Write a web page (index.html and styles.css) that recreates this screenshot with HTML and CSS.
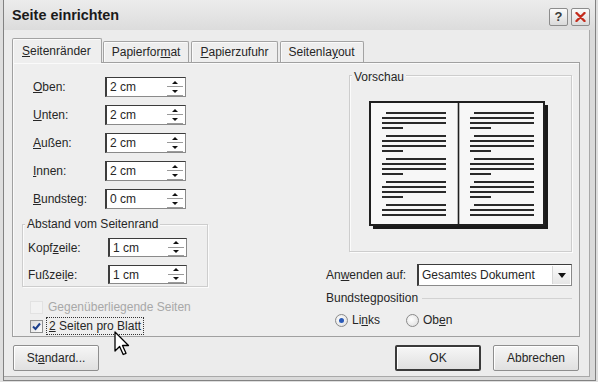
FILE: index.html
```html
<!DOCTYPE html>
<html lang="de">
<head>
<meta charset="utf-8">
<title>Seite einrichten</title>
<link rel="stylesheet" href="styles.css">
</head>
<body>
<div class="window">
  <div class="titlebar">
    <span class="title">Seite einrichten</span>
    <div class="caption-btns">
      <span class="cap-btn help">?</span>
      <span class="cap-btn close"><svg width="11" height="10" viewBox="0 0 11 10"><path d="M1.5 1L9.5 9M9.5 1L1.5 9" stroke="#c42b1c" stroke-width="2.4" stroke-linecap="round"/></svg></span>
    </div>
  </div>
  <div class="client">
    <div class="tabs">
      <span class="tab active"><u>S</u>eitenränder</span>
      <span class="tab">Papierfor<u>m</u>at</span>
      <span class="tab"><u>P</u>apierzufuhr</span>
      <span class="tab">Seitenla<u>y</u>out</span>
    </div>
    <div class="panel">
      <div class="col-left">
        <div class="fields">
          <label><u>O</u>ben:</label>
          <div class="spin"><span class="val">2 cm</span><span class="arrows"><i class="up"></i><i class="dn"></i></span></div>
          <label><u>U</u>nten:</label>
          <div class="spin"><span class="val">2 cm</span><span class="arrows"><i class="up"></i><i class="dn"></i></span></div>
          <label><u>A</u>ußen:</label>
          <div class="spin"><span class="val">2 cm</span><span class="arrows"><i class="up"></i><i class="dn"></i></span></div>
          <label><u>I</u>nnen:</label>
          <div class="spin"><span class="val">2 cm</span><span class="arrows"><i class="up"></i><i class="dn"></i></span></div>
          <label><u>B</u>undsteg:</label>
          <div class="spin"><span class="val">0 cm</span><span class="arrows"><i class="up"></i><i class="dn"></i></span></div>
        </div>
        <div class="group abstand">
          <span class="group-title">Abstand vom Seitenrand</span>
          <div class="fields small">
            <label>Kopf<u>z</u>eile:</label>
            <div class="spin"><span class="val">1 cm</span><span class="arrows"><i class="up"></i><i class="dn"></i></span></div>
            <label>Fußzei<u>l</u>e:</label>
            <div class="spin"><span class="val">1 cm</span><span class="arrows"><i class="up"></i><i class="dn"></i></span></div>
          </div>
        </div>
        <div class="check disabled"><span class="box"></span><span class="ctext">Gegenüberliegende Seiten</span></div>
        <div class="check second"><span class="box checked"><svg width="11" height="11" viewBox="0 0 11 11"><path d="M2 5.5L4.5 8L9 2.5" fill="none" stroke="#1c3f8c" stroke-width="2"/></svg></span><span class="ctext focus"><u>2</u> Seiten pro Blatt</span></div>
      </div>
      <div class="col-right">
        <div class="group preview">
          <span class="group-title">Vorschau</span>
          <svg class="book" width="179" height="128" viewBox="0 0 179 128">
            <defs>
              <path id="lines" d="M17 12H77M13 17H77M13 22H77M13 27H34M17 35H77M13 40H77M13 45H77M13 50H34M17 58H77M13 63H77M13 68H77M13 73H34M17 81H77M13 86H77M13 91H77M13 96H34M17 104H77M13 109H77M13 114H77" stroke="#2a2a2a" stroke-width="2"/>
            </defs>
            <rect x="4" y="4" width="175" height="124" fill="#1a1a1a"/>
            <rect x="1" y="1" width="174" height="123" fill="#f7f7f7" stroke="#1f1f1f" stroke-width="2"/>
            <path d="M89.5 1V124" stroke="#1f1f1f" stroke-width="1.6"/>
            <use href="#lines"/>
            <use href="#lines" transform="translate(88 0)"/>
          </svg>
        </div>
        <div class="apply-row">
          <label>An<u>w</u>enden auf:</label>
          <div class="combo"><span class="val">Gesamtes Dokument</span><span class="drop"><svg width="8" height="5" viewBox="0 0 8 5"><path d="M0 0H8L4 5Z" fill="#111"/></svg></span></div>
        </div>
        <div class="section-line"><span>Bundstegposition</span></div>
        <div class="radios">
          <span class="radio"><span class="dot on"></span>Li<u>n</u>ks</span>
          <span class="radio"><span class="dot"></span>Ob<u>e</u>n</span>
        </div>
      </div>
    </div>
    <div class="buttons">
      <button class="btn">St<u>a</u>ndard...</button>
      <div class="btn-group">
        <button class="btn default">OK</button>
        <button class="btn">Abbrechen</button>
      </div>
    </div>
  </div>
  <svg class="cursor" width="17" height="26" viewBox="0 0 17 26"><path d="M1 1V20L5.6 15.5L9.2 23.5L12 22.3L8.5 14.5H14.5Z" fill="#fff" stroke="#000" stroke-width="1.3" stroke-linejoin="round"/></svg>
</div>
</body>
</html>
```

FILE: styles.css
```css
html, body {
  margin: 0;
  padding: 0;
}
body {
  width: 598px;
  height: 382px;
  background: #dedede;
  font-family: "Liberation Sans", Arial, sans-serif;
  font-size: 12px;
  color: #262626;
  overflow: hidden;
}
u { text-decoration: underline; text-underline-offset: 1px; }

.window {
  position: relative;
  margin-left: 3px;
  width: 593px;
  height: 381px;
  box-sizing: border-box;
  border: 1px solid #828282;
  border-top: none;
  background: #dadada;
}

.titlebar {
  height: 30px;
  display: flex;
  align-items: center;
  justify-content: space-between;
  background: linear-gradient(#ececec, #dcdcdc);
  padding: 0 5px 0 8px;
}
.title {
  font-weight: bold;
  font-size: 14.4px;
  color: #1a1a1a;
}
.caption-btns {
  display: flex;
  gap: 3px;
  margin-top: 3px;
}
.cap-btn {
  width: 19px;
  height: 18px;
  box-sizing: border-box;
  border: 1px solid #8c8c8c;
  border-radius: 2px;
  background: linear-gradient(#fbfbfb, #dadada);
  display: flex;
  align-items: center;
  justify-content: center;
}
.help {
  font-weight: bold;
  font-size: 13px;
  color: #3a3a3a;
}

.client {
  height: 347px;
  box-sizing: border-box;
  margin-right: 5px;
  background: #ececec;
  border-right: 1px solid #a9a9a9;
  border-bottom: 1px solid #a9a9a9;
  padding: 8px 9px 0 8px;
}

.tabs {
  display: flex;
  align-items: flex-end;
  height: 24px;
  position: relative;
  z-index: 1;
}
.tab {
  height: 21px;
  box-sizing: border-box;
  padding: 0 8px;
  line-height: 20px;
  border: 1px solid #a3a3a3;
  border-bottom: none;
  border-radius: 2px 2px 0 0;
  background: #eeeeee;
  box-shadow: inset 1px 1px 0 #fafafa;
  margin-left: 2px;
}
.tab.active {
  height: 25px;
  margin-bottom: -1px;
  margin-left: 0;
  padding: 2px 10px 0 9px;
  background: #eeeeee;
}
.tab.active + .tab { margin-left: 1px; }

.panel {
  height: 275px;
  box-sizing: border-box;
  border: 1px solid #a0a0a0;
  box-shadow: inset 1px 1px 0 #fafafa;
  background: #eeeeee;
  display: flex;
}

.col-left {
  width: 313px;
  padding: 14px 0 0 9px;
  box-sizing: border-box;
}
.fields {
  display: grid;
  grid-template-columns: 72px 81px;
  grid-auto-rows: 20px;
  row-gap: 8px;
  align-items: center;
  margin-left: 11px;
}
.fields.small {
  grid-template-columns: 80px 79px;
  grid-auto-rows: 19px;
  margin-left: 0;
  margin-top: 7px;
}

.spin {
  height: 100%;
  box-sizing: border-box;
  background: #fff;
  border: 1px solid #8a8a8a;
  border-top-color: #3c3c3c;
  border-left: 2px solid #3c3c3c;
  display: flex;
  align-items: center;
}
.spin .val {
  padding-left: 3px;
  flex: 1;
}
.arrows {
  width: 16px;
  height: 100%;
  display: flex;
  flex-direction: column;
  margin-right: 2px;
}
.arrows i {
  flex: 1;
  position: relative;
  border-bottom: 1px solid #9a9a9a;
  display: flex;
  align-items: center;
  justify-content: center;
}
.arrows i::before {
  content: "";
  width: 0;
  height: 0;
  border-left: 3px solid transparent;
  border-right: 3px solid transparent;
}
.arrows .up::before { border-bottom: 3px solid #111; }
.arrows .dn::before { border-top: 3px solid #111; }

.group {
  border: 1px solid #cdcdcd;
  box-shadow: inset 1px 1px 0 #fbfbfb, 1px 1px 0 #fbfbfb;
}
.group-title {
  display: block;
  width: max-content;
  line-height: 14px;
  background: #eeeeee;
  padding: 0 2px;
}
.abstand {
  width: 186px;
  box-sizing: border-box;
  margin-top: 15px;
  padding: 0 0 2px 5px;
}
.abstand .group-title {
  margin-top: -8px;
  margin-left: -3px;
}

.check {
  display: flex;
  align-items: center;
  margin-left: 8px;
  height: 16px;
}
.check.disabled {
  margin-top: 12px;
  color: #a8a8a8;
}
.check.second {
  height: 18px;
  margin-top: 2px;
}
.box {
  width: 13px;
  height: 13px;
  box-sizing: border-box;
  border: 1px solid #8e8f8f;
  background: linear-gradient(135deg, #dcdcdc, #fbfbfb);
  display: flex;
  align-items: center;
  justify-content: center;
  margin-right: 5px;
}
.check.disabled .box {
  border-color: #e2e2e2;
  background: #f2f2f2;
}
.ctext.focus {
  outline: 1px dotted #333;
  outline-offset: 0;
  padding: 1px 2px;
  margin-left: -1px;
}

.col-right {
  flex: 1;
  padding-top: 12px;
  box-sizing: border-box;
}
.preview {
  height: 177px;
  box-sizing: border-box;
  margin: 0 7px 0 23px;
}
.preview .group-title {
  margin-top: -6px;
  margin-left: 2px;
}
.book {
  display: block;
  margin: 17px 0 0 19px;
}

.apply-row {
  display: flex;
  align-items: center;
  margin-top: 12px;
  height: 22px;
}
.apply-row label {
  width: 91px;
}
.combo {
  width: 155px;
  height: 22px;
  box-sizing: border-box;
  background: #fff;
  border: 1px solid #8a8a8a;
  border-top-color: #3c3c3c;
  border-left: 2px solid #3c3c3c;
  display: flex;
  align-items: center;
}
.combo .val {
  flex: 1;
  padding-left: 3px;
}
.drop {
  width: 17px;
  height: 18px;
  margin-right: 1px;
  display: flex;
  align-items: center;
  justify-content: center;
  background: linear-gradient(#fafafa, #e6e6e6);
  border-left: 1px solid #d6d6d6;
}

.section-line {
  display: flex;
  align-items: center;
  margin: 5px 7px 0 0;
  height: 14px;
}
.section-line::after {
  content: "";
  flex: 1;
  border-top: 1px solid #d2d2d2;
  margin-left: 4px;
}

.radios {
  display: flex;
  margin-top: 8px;
  padding-left: 9px;
  height: 14px;
  align-items: center;
}
.radio {
  display: flex;
  align-items: center;
  width: 71px;
}
.dot {
  width: 13px;
  height: 13px;
  box-sizing: border-box;
  border-radius: 50%;
  border: 1px solid #8a8a8a;
  background: radial-gradient(circle at 40% 40%, #ffffff, #dadada);
  margin-right: 4px;
  display: flex;
  align-items: center;
  justify-content: center;
}
.dot.on::before {
  content: "";
  width: 5px;
  height: 5px;
  border-radius: 50%;
  background: #2a5ab8;
}

.buttons {
  display: flex;
  justify-content: space-between;
  margin-top: 8px;
  padding: 0 1px 0 1px;
}
.btn-group {
  display: flex;
  gap: 12px;
}
.btn {
  width: 86px;
  height: 26px;
  box-sizing: border-box;
  font-family: "Liberation Sans", Arial, sans-serif;
  font-size: 12px;
  color: #262626;
  border: 1px solid #8e8e8e;
  border-radius: 2px;
  background: linear-gradient(#f6f6f6, #e0e0e0);
  box-shadow: inset 1px 1px 0 #ffffff;
  padding: 0;
}
.btn.default {
  border: 2px solid #3a3a3a;
}

.cursor {
  position: absolute;
  left: 110px;
  top: 331px;
}
```
